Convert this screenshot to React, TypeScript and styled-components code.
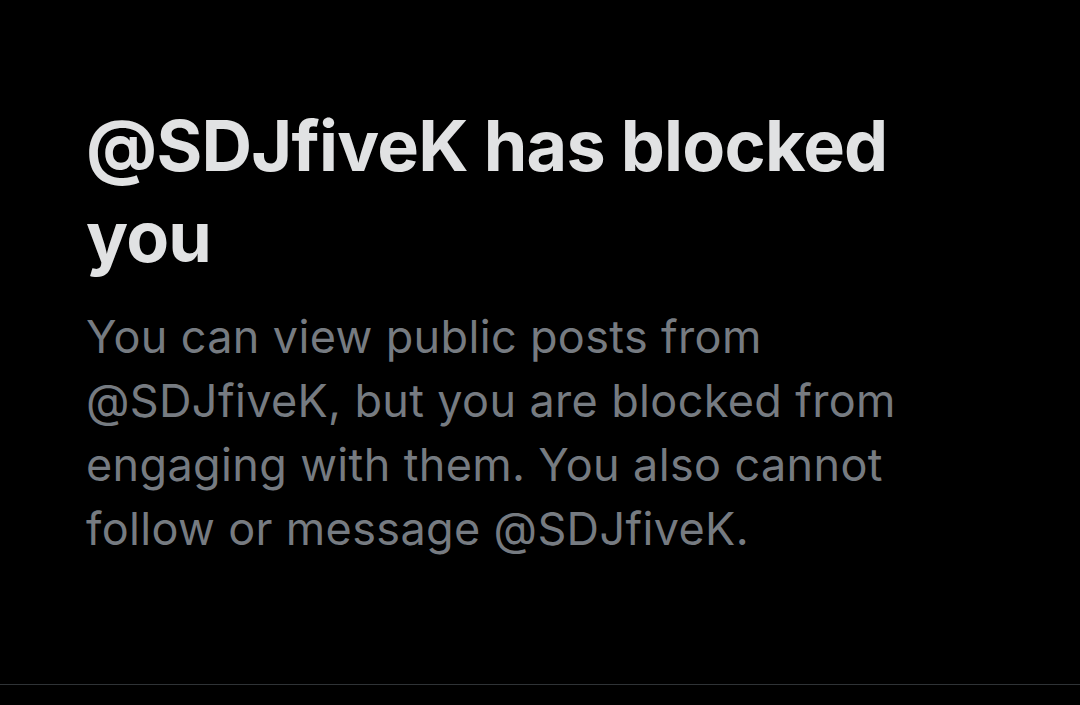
import React from "react";
import styled, { createGlobalStyle } from "styled-components";

const Global = createGlobalStyle`
  html, body { margin: 0; padding: 0; background: #000; }
  body { font-family: Inter, "Noto Sans", sans-serif; }
`;

const Page = styled.div`
  width: 1080px;
  height: 705px;
  background: #000;
  display: flex;
  flex-direction: column;
  box-sizing: border-box;
  overflow: hidden;
`;

const Content = styled.div`
  flex: 1;
  padding: 100px 86px 0 86px;
  display: flex;
  flex-direction: column;
  gap: 23px;
`;

const Title = styled.h1`
  margin: 0;
  font-family: Inter, "Noto Sans", sans-serif;
  font-weight: 700;
  font-size: 70px;
  line-height: 91px;
  color: #e1e2e3;
  width: 820px;
  letter-spacing: -0.75px;
`;

const Body = styled.p`
  margin: 0;
  font-family: Inter, "Noto Sans", sans-serif;
  font-weight: 400;
  font-size: 45px;
  line-height: 64px;
  color: #767b81;
  letter-spacing: 0.35px;
  width: 830px;
`;

const Divider = styled.div`
  height: 1px;
  background: #2f3336;
  margin-bottom: 20px;
`;

export default function App() {
  return (
    <>
      <Global />
      <Page>
        <Content>
          <Title>@SDJfiveK has blocked you</Title>
          <Body>
            You can view public posts from @SDJfiveK, but you are blocked from
            engaging with them. You also cannot follow or message @SDJfiveK.
          </Body>
        </Content>
        <Divider />
      </Page>
    </>
  );
}
